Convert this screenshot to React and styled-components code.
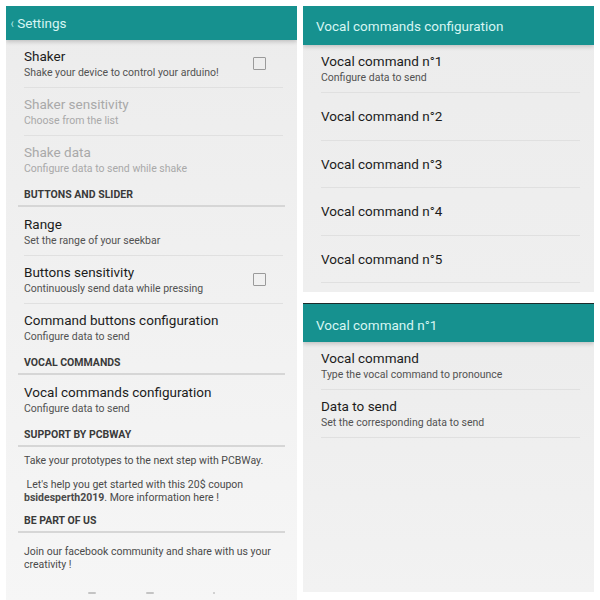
import React from 'react'
import styled, { createGlobalStyle } from 'styled-components'

const GlobalStyle = createGlobalStyle`
  html, body {
    margin: 0;
    padding: 0;
    background: #ffffff;
    overflow: hidden;
  }
  body {
    font-family: Roboto, "Liberation Sans", Arial, sans-serif;
    -webkit-font-smoothing: antialiased;
  }
`

const Page = styled.div`
  display: grid;
  grid-template-columns: 291px 291px;
  column-gap: 6px;
  padding: 6px 0 0 6px;
  width: 600px;
  height: 600px;
  box-sizing: border-box;
  align-items: start;
`

const RightColumn = styled.div`
  display: flex;
  flex-direction: column;
  gap: 11px;
`

const Panel = styled.div`
  display: flex;
  flex-direction: column;
  height: ${(p) => p.$height}px;
  background: linear-gradient(#ececec, ${(p) => p.$fade || '#efefef'});
  overflow: hidden;
`

const Header = styled.div`
  display: flex;
  align-items: center;
  height: ${(p) => p.$height}px;
  flex-shrink: 0;
  box-sizing: border-box;
  background: #16918f;
  color: #d6f6f3;
  font-size: 13.5px;
  padding: ${(p) => p.$top || 0}px 0 0 ${(p) => p.$pad || 13}px;
  box-shadow: 0 2px 4px rgba(0, 0, 0, 0.18);
  position: relative;
  z-index: 1;
  border-top: ${(p) => (p.$dark ? '1px solid #1d2b2b' : 'none')};
`

const Back = styled.span`
  font-size: 14px;
  margin-right: 3px;
  color: #bfeeea;
  transform: scaleX(0.7);
`

const List = styled.div`
  display: flex;
  flex-direction: column;
  padding-left: 18px;
`

const Item = styled.div`
  display: flex;
  align-items: ${(p) => (p.$single ? 'center' : 'flex-start')};
  height: ${(p) => p.$h || 48}px;
  padding: ${(p) => (p.$single ? '0' : '7px 0 0')};
  box-sizing: border-box;
  margin-right: 14px;
  border-bottom: ${(p) => (p.$last ? 'none' : '1px solid #e0e0e0')};
`

const ItemText = styled.div`
  flex: 1;
  display: flex;
  flex-direction: column;
`

const Title = styled.div`
  font-size: 13.5px;
  line-height: 18px;
  color: ${(p) => (p.$disabled ? '#a9a9a9' : '#1c1c1c')};
`

const Summary = styled.div`
  font-size: 10.5px;
  line-height: 14px;
  margin-top: 1px;
  color: ${(p) => (p.$disabled ? '#a9a9a9' : '#525252')};
`

const CheckBox = styled.span`
  width: 11px;
  height: 11px;
  border: 1px solid #9a9a9a;
  border-radius: 1px;
  margin: 10px 17px 0 0;
`

const Category = styled.div`
  font-size: 10.5px;
  font-weight: bold;
  line-height: 14px;
  color: #3a3a3a;
  padding: 4px 0 3px 6px;
  margin: 0 12px 1px -6px;
  border-bottom: 2px solid #d6d6d6;
`

const Note = styled.div`
  display: flex;
  flex-direction: column;
  gap: 11px;
  padding: ${(p) => p.$top}px 14px ${(p) => p.$bottom}px 0;
  font-size: 10.5px;
  line-height: 13px;
  color: #4a4a4a;
`

const NavBar = styled.div`
  display: flex;
  align-items: center;
  padding: 21px 0 0 82px;
`

const NavMark = styled.span`
  width: ${(p) => p.$w}px;
  height: 2px;
  margin-left: ${(p) => p.$gap || 0}px;
  border-radius: 1px;
  background: #c4c4c4;
`

function Pref({ title, summary, checkbox, disabled, last, h }) {
  return (
    <Item $single={!summary} $last={last} $h={h}>
      <ItemText>
        <Title $disabled={disabled}>{title}</Title>
        {summary && <Summary $disabled={disabled}>{summary}</Summary>}
      </ItemText>
      {checkbox && <CheckBox />}
    </Item>
  )
}

export default function App() {
  return (
    <>
      <GlobalStyle />
      <Page>
        <Panel $height={600} $fade="#f6f6f6">
          <Header $height={34} $pad={4}>
            <Back>‹</Back>
            Settings
          </Header>
          <List>
            <Pref title="Shaker" summary="Shake your device to control your arduino!" checkbox />
            <Pref title="Shaker sensitivity" summary="Choose from the list" disabled />
            <Pref title="Shake data" summary="Configure data to send while shake" disabled last />
            <Category>BUTTONS AND SLIDER</Category>
            <Pref title="Range" summary="Set the range of your seekbar" />
            <Pref title="Buttons sensitivity" summary="Continuously send data while pressing" checkbox />
            <Pref title="Command buttons configuration" summary="Configure data to send" last />
            <Category>VOCAL COMMANDS</Category>
            <Pref title="Vocal commands configuration" summary="Configure data to send" last />
            <Category>SUPPORT BY PCBWAY</Category>
            <Note $top={6} $bottom={6}>
              <span>Take your prototypes to the next step with PCBWay.</span>
              <span>
                &nbsp;Let's help you get started with this 20$ coupon
                <br />
                <b>bsidesperth2019</b>. More information here !
              </span>
            </Note>
            <Category>BE PART OF US</Category>
            <Note $top={11} $bottom={0}>
              <span>Join our facebook community and share with us your creativity !</span>
            </Note>
          </List>
          <NavBar>
            <NavMark $w={8} />
            <NavMark $w={8} $gap={50} />
            <NavMark $w={2} $gap={59} />
          </NavBar>
        </Panel>
        <RightColumn>
          <Panel $height={286}>
            <Header $height={39}>Vocal commands configuration</Header>
            <List>
              <Pref title="Vocal command n°1" summary="Configure data to send" />
              <Pref title="Vocal command n°2" h={47.5} />
              <Pref title="Vocal command n°3" h={47.5} />
              <Pref title="Vocal command n°4" h={47.5} />
              <Pref title="Vocal command n°5" h={47.5} />
            </List>
          </Panel>
          <Panel $height={289} $fade="#f2f2f2">
            <Header $height={39} $top={3} $dark>Vocal command n°1</Header>
            <List>
              <Pref title="Vocal command" summary="Type the vocal command to pronounce" />
              <Pref title="Data to send" summary="Set the corresponding data to send" />
            </List>
          </Panel>
        </RightColumn>
      </Page>
    </>
  )
}
